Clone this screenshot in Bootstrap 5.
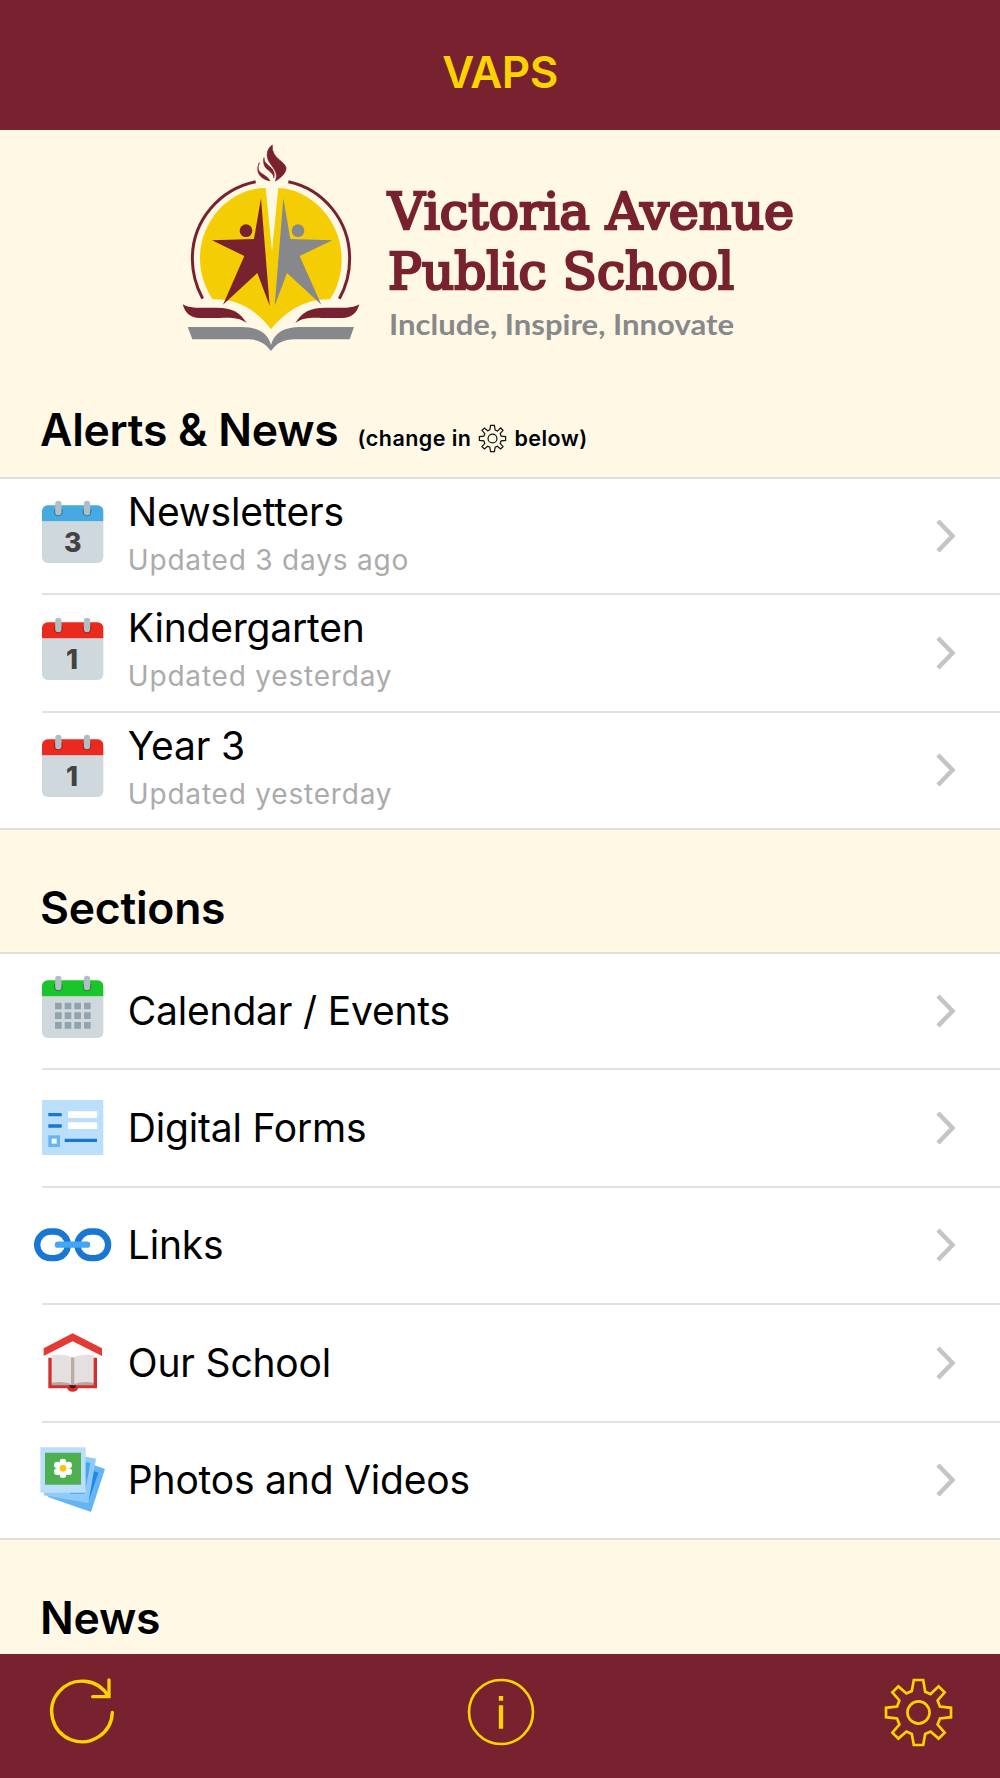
<!DOCTYPE html>
<html lang="en">
<head>
    <meta charset="UTF-8">
    <meta name="viewport" content="width=device-width, initial-scale=1.0">
    <title>VAPS</title>
    <link rel="stylesheet" href="https://cdn.jsdelivr.net/npm/bootstrap@5.3.0/dist/css/bootstrap.min.css">
    <style>
        body {
            background: #fff8e5;
            color: #000;
            font-family: Inter, "Liberation Sans", sans-serif;
            height: 1778px;
            overflow: hidden;
        }
        svg { display: block; overflow: visible; flex: none; }
        .school-bar { background: #78222f; color: #fbd300; }
        .top-bar { height: 130px; padding-top: 14px; }
        .top-bar h1 { font-size: 44px; font-weight: 600; letter-spacing: -.5px; }
        .school-logo { height: 266px; padding-left: 170px; }
        .section-title { padding-left: 40px; }
        .section-title h2 {
            font-size: 44.5px;
            font-weight: 600;
            line-height: 52px;
            letter-spacing: -.25px;
            text-shadow: 0 2px 0 #fff;
        }
        .hint { font-size: 21.5px; font-weight: 600; letter-spacing: .45px; margin-left: 19px; text-shadow: 0 2px 0 #fff; }
        .title-alerts { height: 81px; padding-top: 8px; }
        .title-sections { height: 122.5px; padding-top: 52px; }
        .title-news { height: 114.5px; padding-top: 52px; }
        .rows { background: #fff; border-top: 2px solid #dfdfdc; border-bottom: 2px solid #dfdfdc; }
        .item { height: 117.5px; margin-left: 42px; border-bottom: 2px solid #e2e2e3; padding-right: 44px; color: #000; }
        .item:first-child { height: 116px; }
        .item:last-child { border-bottom: 0; height: 115px; }
        .item-icon { width: 61.33px; height: 64px; margin-top: -8px; }
        .item-text { margin-left: 24.5px; }
        .item-name { font-size: 39px; line-height: 46px; letter-spacing: -.2px; }
        .item-date { font-size: 28px; line-height: 34px; margin-top: 8px; margin-bottom: 7px; color: #ababab; letter-spacing: .8px; }
        .chevron { fill: none; stroke: #c4c4c6; stroke-width: 4.5; }
        .bottom-bar { height: 124px; padding: 0 48px 8px 50px; }
        .bar-icon { fill: none; stroke: #fbd300; }
    </style>
</head>
<body class="d-flex flex-column">

    <svg width="0" height="0" class="position-absolute">
        <defs>
            <symbol id="calendar" viewBox="66 60 184 192" overflow="visible">
                <path d="M66 124h184v108a17 17 0 0 1-17 17H83a17 17 0 0 1-17-17z" fill="#cfd8dc"/>
                <path d="M66 124V93a17 17 0 0 1 17-17h150a17 17 0 0 1 17 17v31z" fill="currentColor"/>
                <path d="M102 88v8a13 13 0 0 0 26 0v-8zM188 88v8a13 13 0 0 0 26 0v-8z" fill="#000" fill-opacity=".28"/>
                <path d="M115 72v24M201 72v24" stroke="#b0bec5" stroke-width="19" stroke-linecap="round"/>
            </symbol>
            <symbol id="chevron" viewBox="0 0 20 34">
                <path class="chevron" d="M2 2l14.500 15L2 32"/>
            </symbol>
            <symbol id="gear" viewBox="-100 -100 200 200" overflow="visible">
                <path d="M-14-97H14L20-62 36-55 60-78 78-60 57-36 64-18 97-14V14L64 18 57 36 78 60 60 78 36 57 20 64 14 97H-14L-20 64-36 57-60 78-78 60-57 36-64 18-97 14V-14L-64-18-57-36-78-60-60-78-36-57-20-64z"/>
                <circle r="33"/>
            </symbol>
        </defs>
    </svg>

    <header class="school-bar top-bar d-flex align-items-center justify-content-center flex-shrink-0">
        <h1 class="m-0">VAPS</h1>
    </header>

    <main class="flex-grow-1">
        <div class="school-logo">
            <svg width="640" height="230" viewBox="0 0 640 230">
                <g transform="scale(.33333)">
                    <!-- sun and torch -->
                    <path d="M128 508C104 470 90 430 90 386C90 268 184 174 287 174L306 364L325 174C424 178 515 272 515 386C515 430 503 475 480 508C410 506 350 540 303 598C258 540 205 506 128 508z" fill="#f5cd05"/>
                    <path d="M257 155C150 177 67 270 67 386C67 430 79 470 98 506M355 155C460 177 539 272 539 386C539 430 527 472 508 506" fill="none" stroke="#78222f" stroke-width="9"/>
                    <path d="M307 45C288 58 288 82 299 98C312 117 326 130 316 153C338 140 350 124 348 113C344 93 303 84 307 45zM282 83C278 103 285 113 296 121C307 130 312 137 311 144C316 130 310 118 300 110C289 101 281 94 282 83zM268 98C259 119 268 125 279 133C290 140 296 145 300 153C278 149 260 133 264 114C265 106 267 102 268 98z" fill="#78222f" stroke="#78222f" stroke-width="2"/>
                    <!-- children -->
                    <path d="M273 205L299 527L262 429L159 524L223 378L126 331L252 327z" fill="#78222f"/>
                    <path d="M340 205L314 527L351 429L454 524L389 378L487 331L361 327z" fill="#87888c"/>
                    <circle cx="228" cy="302" r="19" fill="#78222f"/>
                    <circle cx="384" cy="302" r="19" fill="#87888c"/>
                    <!-- open book -->
                    <path d="M38 523C60 537 95 533 140 533C190 533 210 548 230 579C205 562 180 563 150 564H90C60 564 45 548 38 523zM568 523C546 537 511 533 466 533C416 533 396 548 376 579C401 562 426 563 456 564H516C546 564 561 548 568 523z" fill="#78222f"/>
                    <path d="M53 591H215C265 591 294 610 303 645C312 610 341 591 391 591H552L539 628H375C340 628 320 640 303 663C286 640 266 628 231 628H67z" fill="#87888c"/>
                </g>
                <g font-family="DejaVu Serif" font-size="51" fill="#78222f" stroke="#78222f" stroke-width="2.600">
                    <text x="218" y="99" textLength="406" lengthAdjust="spacingAndGlyphs">Victoria Avenue</text>
                    <text x="218" y="158.500" textLength="346" lengthAdjust="spacingAndGlyphs">Public School</text>
                </g>
                <text x="219" y="204.500" font-family="Lato" font-weight="700" font-size="28.500" fill="#87888c" textLength="345" lengthAdjust="spacingAndGlyphs">Include, Inspire, Innovate</text>
            </svg>
        </div>

        <div class="section-title title-alerts d-flex align-items-baseline">
            <h2 class="m-0">Alerts &amp; News</h2>
            <div class="hint d-flex align-items-center">
                <span>(change in</span>
                <svg class="mx-2" width="27" height="27" fill="none" stroke="#111" stroke-width="9"><use href="#gear"/></svg>
                <span>below)</span>
            </div>
        </div>

        <div class="rows">
            <div class="item d-flex align-items-center">
                <svg class="item-icon" viewBox="66 60 184 192" color="#46a9e0">
                    <use href="#calendar" x="66" y="60" width="184" height="192"/>
                    <text x="158" y="215" text-anchor="middle" font-size="80" font-weight="800" fill="#424242">3</text>
                </svg>
                <div class="item-text flex-grow-1">
                    <div class="item-name">Newsletters</div>
                    <div class="item-date">Updated 3 days ago</div>
                </div>
                <svg width="20" height="34"><use href="#chevron"/></svg>
            </div>
            <div class="item d-flex align-items-center">
                <svg class="item-icon" viewBox="66 60 184 192" color="#ea2a1f">
                    <use href="#calendar" x="66" y="60" width="184" height="192"/>
                    <text x="156" y="217" text-anchor="middle" font-size="82" font-weight="800" fill="#424242">1</text>
                </svg>
                <div class="item-text flex-grow-1">
                    <div class="item-name">Kindergarten</div>
                    <div class="item-date">Updated yesterday</div>
                </div>
                <svg width="20" height="34"><use href="#chevron"/></svg>
            </div>
            <div class="item d-flex align-items-center">
                <svg class="item-icon" viewBox="66 60 184 192" color="#ea2a1f">
                    <use href="#calendar" x="66" y="60" width="184" height="192"/>
                    <text x="156" y="217" text-anchor="middle" font-size="82" font-weight="800" fill="#424242">1</text>
                </svg>
                <div class="item-text flex-grow-1">
                    <div class="item-name">Year 3</div>
                    <div class="item-date">Updated yesterday</div>
                </div>
                <svg width="20" height="34"><use href="#chevron"/></svg>
            </div>
        </div>

        <div class="section-title title-sections">
            <h2 class="m-0">Sections</h2>
        </div>

        <div class="rows">
            <div class="item d-flex align-items-center">
                <svg class="item-icon" viewBox="66 60 184 192" color="#19c52a">
                    <use href="#calendar" x="66" y="60" width="184" height="192"/>
                    <path d="M105 153h107M105 182h107M105 211h107" stroke="#90a4ae" stroke-width="20" stroke-dasharray="20 9"/>
                </svg>
                <div class="item-text item-name flex-grow-1">Calendar / Events</div>
                <svg width="20" height="34"><use href="#chevron"/></svg>
            </div>
            <div class="item d-flex align-items-center">
                <svg class="item-icon" viewBox="66 36 184 192">
                    <rect x="66" y="60" width="184" height="165" rx="3" fill="#bbdefb"/>
                    <path d="M85 104h40M85 138h40M134 181h97" stroke="#1976d2" stroke-width="10"/>
                    <rect x="144" y="94" width="88" height="20" rx="4" fill="#fff"/>
                    <rect x="144" y="127" width="88" height="20" rx="4" fill="#fff"/>
                    <rect x="90" y="171" width="25" height="25" fill="#fff" stroke="#64b5f6" stroke-width="10"/>
                </svg>
                <div class="item-text item-name flex-grow-1">Digital Forms</div>
                <svg width="20" height="34"><use href="#chevron"/></svg>
            </div>
            <div class="item d-flex align-items-center">
                <svg class="item-icon" viewBox="66 388 184 192">
                    <g fill="none" stroke="#1976d2" stroke-width="19">
                        <rect x="51.500" y="455.500" width="92" height="80" rx="40"/>
                        <rect x="172.500" y="455.500" width="92" height="80" rx="40"/>
                    </g>
                    <path d="M114 495h87" stroke="#42a5f5" stroke-width="19" stroke-linecap="round"/>
                </svg>
                <div class="item-text item-name flex-grow-1">Links</div>
                <svg width="20" height="34"><use href="#chevron"/></svg>
            </div>
            <div class="item d-flex align-items-center">
                <svg class="item-icon" viewBox="66 51 184 192">
                    <path d="M85 143h146v92h-57a16 10 0 0 1-32 0H85z" fill="#d32f2f"/>
                    <path d="M95 215h126v11H95z" fill="#b7a8a2"/>
                    <path d="M95 135C120 133 145 134 158 144C171 134 196 133 221 135V218C196 214 170 217 158 226C146 217 120 214 95 218z" fill="#e3e0df"/>
                    <path d="M153 143h10v83h-10z" fill="#bcaaa4"/>
                    <path d="M148 226h20a10 9 0 0 1-20 0z" fill="#3e1512"/>
                    <path d="M158 70L246 115V138L158 94L71 138V115z" fill="#e53935"/>
                </svg>
                <div class="item-text item-name flex-grow-1">Our School</div>
                <svg width="20" height="34"><use href="#chevron"/></svg>
            </div>
            <div class="item d-flex align-items-center">
                <svg class="item-icon" viewBox="66 403 184 192">
                    <path d="M128 433L255 478L213 607L84 562z" fill="#64b5f6"/>
                    <path d="M190 472L235 489L207 571L150 550z" fill="#1e88e5"/>
                    <path d="M95 421L228 447L205 580L71 557z" fill="#90caf9"/>
                    <path d="M160 450L211 460L194 552H150z" fill="#42a5f5"/>
                    <path d="M61 413h136v136H61z" fill="#bbdefb"/>
                    <path d="M75 429h108v96H75z" fill="#4caf50"/>
                    <g fill="#fff">
                        <circle cx="129" cy="457" r="10"/>
                        <circle cx="129" cy="495" r="10"/>
                        <circle cx="112" cy="466" r="10"/>
                        <circle cx="146" cy="466" r="10"/>
                        <circle cx="112" cy="486" r="10"/>
                        <circle cx="146" cy="486" r="10"/>
                        <circle cx="129" cy="476" r="16"/>
                    </g>
                    <circle cx="129" cy="476" r="10" fill="#ffc107"/>
                </svg>
                <div class="item-text item-name flex-grow-1">Photos and Videos</div>
                <svg width="20" height="34"><use href="#chevron"/></svg>
            </div>
        </div>

        <div class="section-title title-news">
            <h2 class="m-0">News</h2>
        </div>
    </main>

    <footer class="school-bar bottom-bar d-flex align-items-center justify-content-between flex-shrink-0">
        <svg class="bar-icon" width="66" height="68" viewBox="150 322 198 204" stroke-width="10">
            <path d="M337 425A91 91 0 1 1 325 377" stroke-linecap="round"/>
            <path d="M327 328V378H278" stroke-linecap="round"/>
        </svg>
        <svg class="bar-icon" width="66" height="66" viewBox="82 117 198 198">
            <circle cx="181" cy="216" r="96" stroke-width="8"/>
            <path d="M181 196v70M181 168v14" stroke-width="13"/>
        </svg>
        <svg class="bar-icon" width="67" height="67" stroke-width="8"><use href="#gear"/></svg>
    </footer>

    <script src="https://cdn.jsdelivr.net/npm/bootstrap@5.3.0/dist/js/bootstrap.bundle.min.js"></script>
</body>
</html>
